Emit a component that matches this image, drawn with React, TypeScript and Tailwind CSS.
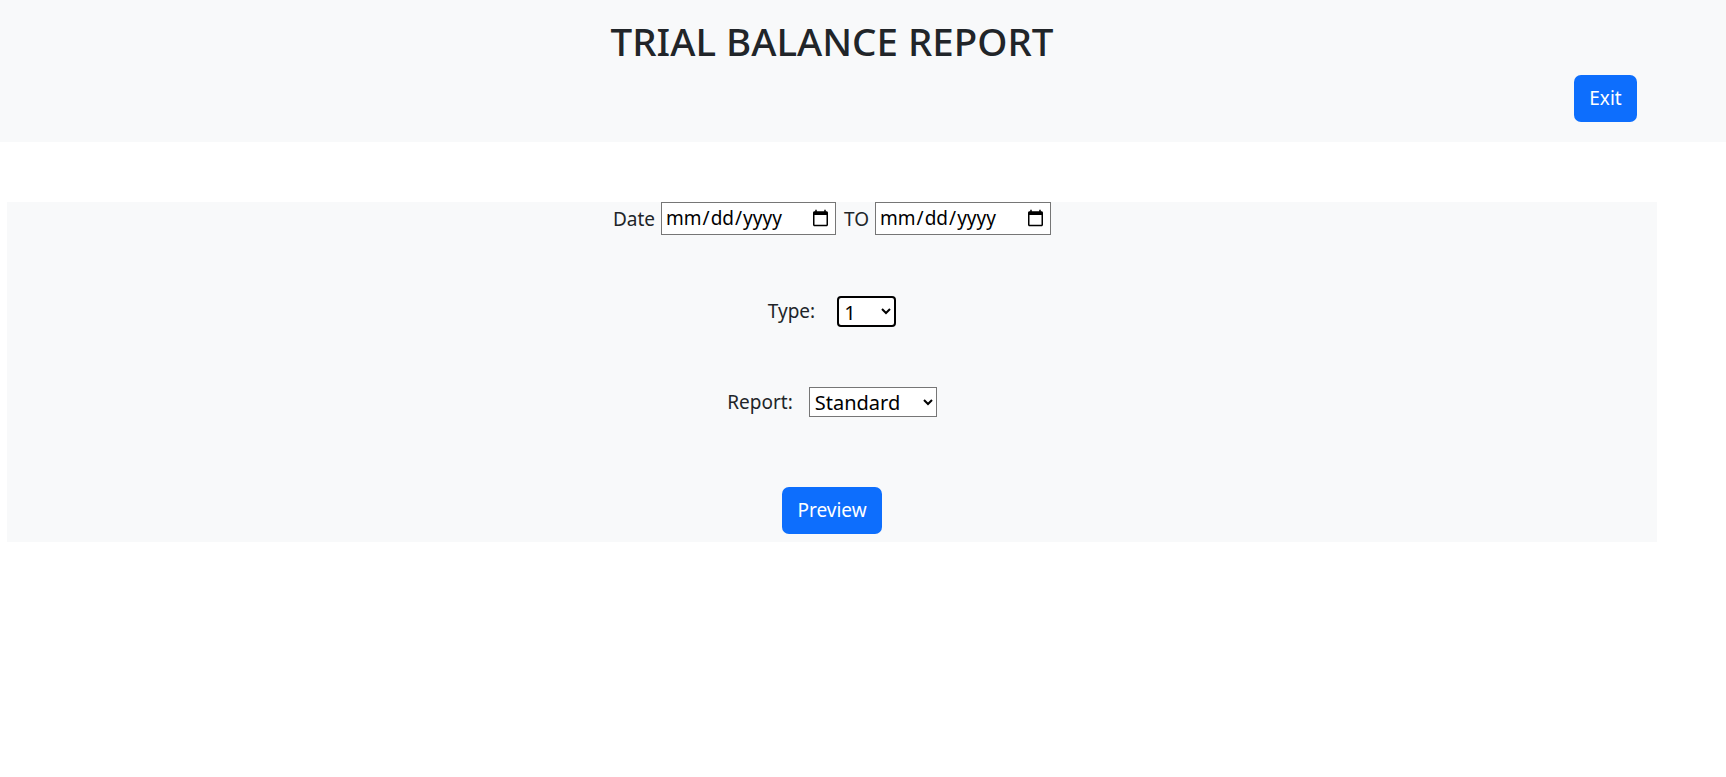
export default function App() {
  return (
    <div className="min-h-[777px] bg-white text-[#212529] [font-family:'Noto_Sans','Segoe_UI',sans-serif]">
      <header className="bg-[#f8f9fa] pb-[20px]">
        <div className="ml-[7px] w-[1650px]">
          <h1 className="pt-[17px] text-center text-[38.5px] font-medium leading-[48px]">
            TRIAL BALANCE REPORT
          </h1>
          <div className="mt-[10px] flex justify-end pr-[20px]">
            <button className="h-[47px] w-[63px] rounded-[7px] bg-[#0d6efd] text-[19px] text-white">
              Exit
            </button>
          </div>
        </div>
      </header>

      <section className="ml-[7px] mt-[60px] flex w-[1650px] flex-col items-center bg-[#f8f9fa] pb-[8px] text-[19px]">
        <div className="flex h-[33px] items-center">
          <span className="pt-[2px]">Date</span>
          <input
            type="date"
            className="ml-[6px] h-[33px] w-[175px] border border-[#767676] bg-white px-[3px] text-[19px] text-black"
          />
          <span className="ml-[8px] pt-[2px]">TO</span>
          <input
            type="date"
            className="ml-[6px] h-[33px] w-[176px] border border-[#767676] bg-white px-[3px] text-[19px] text-black"
          />
        </div>

        <div className="mt-[61px] flex h-[31px] items-center">
          <span>Type:</span>
          <select
            defaultValue="1"
            className="ml-[22px] h-[31px] w-[59px] rounded-[4px] border-2 border-black bg-white px-[1px] text-[20px] text-black"
          >
            <option value="1">1</option>
            <option value="2">2</option>
            <option value="3">3</option>
          </select>
        </div>

        <div className="mt-[60px] flex h-[30px] items-center">
          <span>Report:</span>
          <select
            defaultValue="Standard"
            className="ml-[16px] h-[30px] w-[128px] border border-[#767676] bg-white px-[1px] text-[20px] text-black"
          >
            <option value="Standard">Standard</option>
            <option value="Detailed">Detailed</option>
          </select>
        </div>

        <button className="mt-[70px] h-[47px] w-[100px] rounded-[7px] bg-[#0d6efd] text-[19px] text-white">
          Preview
        </button>
      </section>
    </div>
  );
}
